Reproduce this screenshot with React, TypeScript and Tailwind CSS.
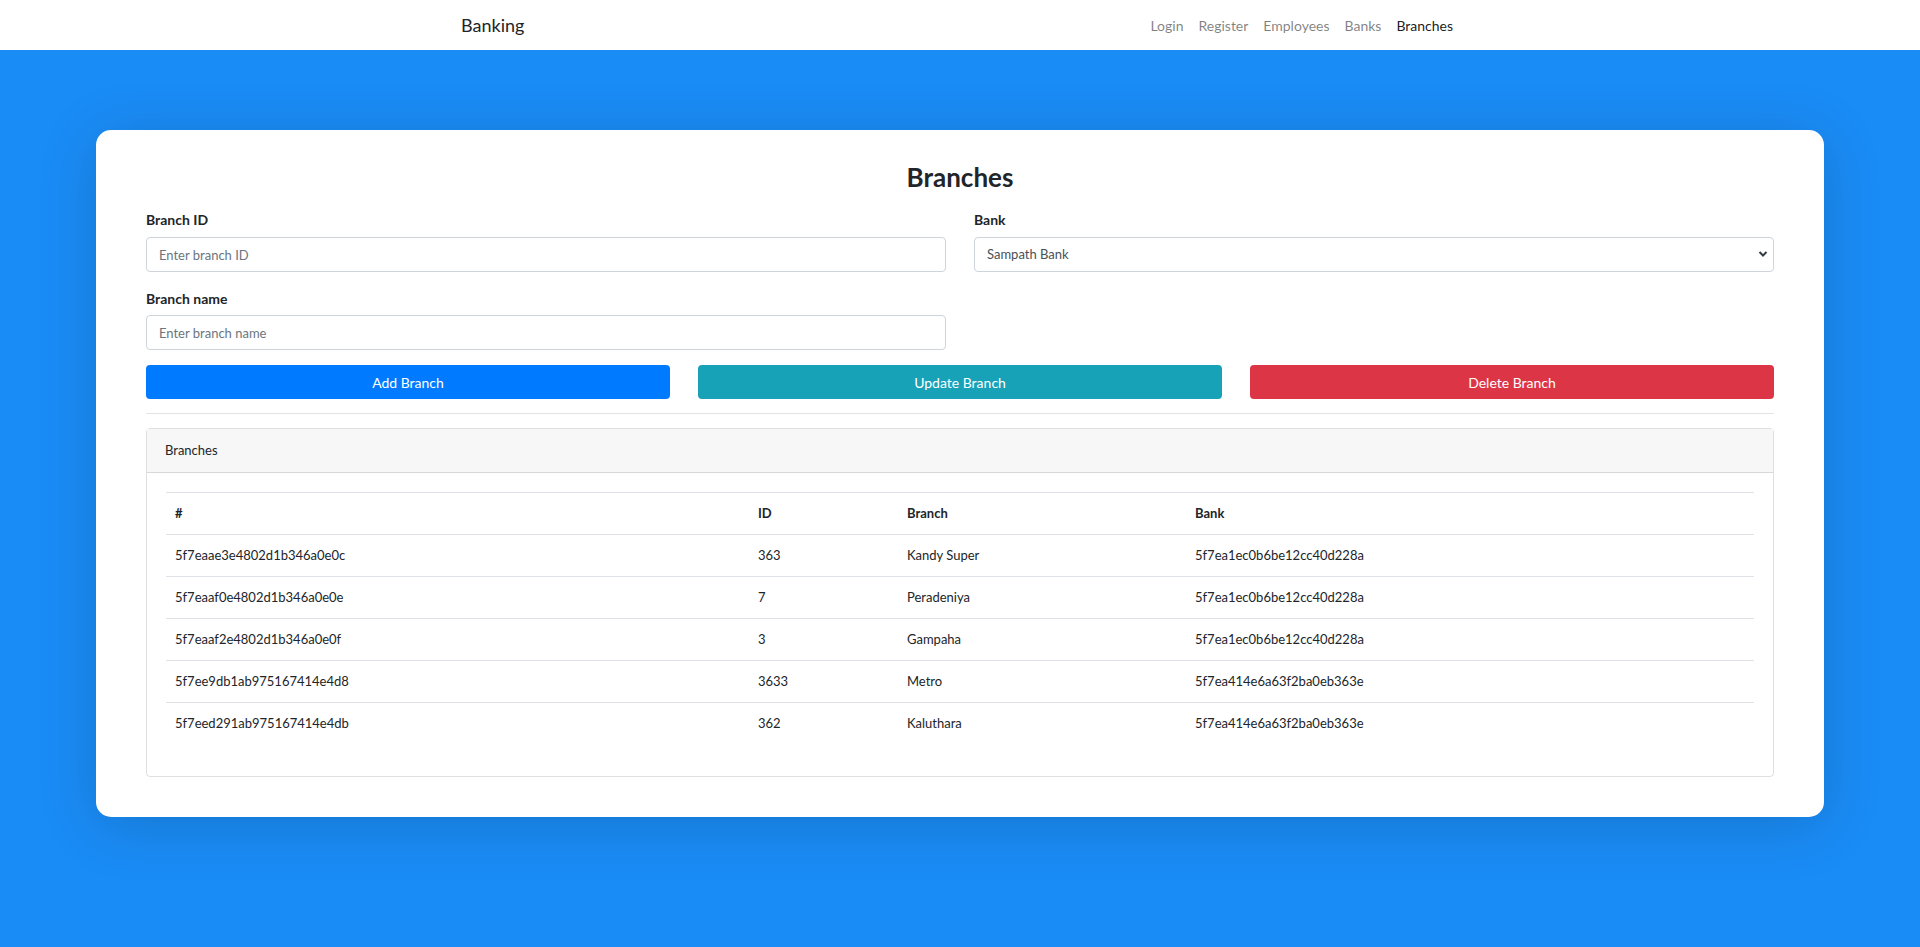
import { useState } from 'react'

const branches = [
  { _id: '5f7eaae3e4802d1b346a0e0c', id: '363', name: 'Kandy Super', bank: '5f7ea1ec0b6be12cc40d228a' },
  { _id: '5f7eaaf0e4802d1b346a0e0e', id: '7', name: 'Peradeniya', bank: '5f7ea1ec0b6be12cc40d228a' },
  { _id: '5f7eaaf2e4802d1b346a0e0f', id: '3', name: 'Gampaha', bank: '5f7ea1ec0b6be12cc40d228a' },
  { _id: '5f7ee9db1ab975167414e4d8', id: '3633', name: 'Metro', bank: '5f7ea414e6a63f2ba0eb363e' },
  { _id: '5f7eed291ab975167414e4db', id: '362', name: 'Kaluthara', bank: '5f7ea414e6a63f2ba0eb363e' },
]

const NavBar = () => {
  const links = ['Login', 'Register', 'Employees', 'Banks', 'Branches']
  return (
    <nav className="relative z-10 h-[50px] bg-white">
      <div className="mx-auto flex h-full w-[998px] items-center justify-between pr-[6px]">
        <span className="text-[18px] text-[#212529]">Banking</span>
        <div className="flex items-center gap-[15px] text-[14px]">
          {links.map((l) => (
            <a
              key={l}
              className={l === 'Branches' ? 'text-[rgba(0,0,0,0.9)]' : 'text-[rgba(0,0,0,0.5)]'}
            >
              {l}
            </a>
          ))}
        </div>
      </div>
    </nav>
  )
}

const BranchForm = () => {
  const [branchId, setBranchId] = useState('')
  const [branchName, setBranchName] = useState('')
  const [bank, setBank] = useState('Sampath Bank')

  return (
    <div>
      <div className="grid grid-cols-2 gap-x-[28px]">
        <div className="mb-[16px]">
          <label className="mb-[7px] block text-[14px] font-bold leading-[21px] text-[#212529]">Branch ID</label>
          <input
            value={branchId}
            onChange={(e) => setBranchId(e.target.value)}
            placeholder="Enter branch ID"
            className="h-[35px] w-full rounded-[4px] border border-[#ced4da] px-[12px] text-[13px] text-[#495057] outline-none placeholder:text-[#6c757d]"
          />
        </div>
        <div className="mb-[16px]">
          <label className="mb-[7px] block text-[14px] font-bold leading-[21px] text-[#212529]">Bank</label>
          <div className="relative">
            <select
              value={bank}
              onChange={(e) => setBank(e.target.value)}
              className="h-[35px] w-full appearance-none rounded-[4px] border border-[#ced4da] bg-white px-[12px] text-[13px] text-[#495057] outline-none"
            >
              <option>Sampath Bank</option>
              <option>Commercial Bank</option>
            </select>
            <svg
              className="pointer-events-none absolute right-[6px] top-[13px]"
              width="10"
              height="8"
              viewBox="0 0 10 8"
            >
              <path d="M1.5 2l3.5 3.5L8.5 2" fill="none" stroke="#343a40" strokeWidth="2" />
            </svg>
          </div>
        </div>
        <div className="mb-[15px]">
          <label className="mb-[6px] block text-[14px] font-bold leading-[21px] text-[#212529]">Branch name</label>
          <input
            value={branchName}
            onChange={(e) => setBranchName(e.target.value)}
            placeholder="Enter branch name"
            className="h-[35px] w-full rounded-[4px] border border-[#ced4da] px-[12px] text-[13px] text-[#495057] outline-none placeholder:text-[#6c757d]"
          />
        </div>
      </div>
      <div className="grid grid-cols-3 gap-x-[28px]">
        <button className="h-[34px] rounded-[4px] bg-[#007bff] text-[14px] text-white">Add Branch</button>
        <button className="h-[34px] rounded-[4px] bg-[#17a2b8] text-[14px] text-white">Update Branch</button>
        <button className="h-[34px] rounded-[4px] bg-[#dc3545] text-[14px] text-white">Delete Branch</button>
      </div>
      <hr className="mb-[14px] mt-[14px] border-t border-[#e3e3e3]" />
    </div>
  )
}

const BranchTable = () => {
  return (
    <div className="rounded-[4px] border border-[rgba(0,0,0,0.125)]">
      <div className="h-[44px] border-b border-[rgba(0,0,0,0.125)] bg-[#f7f7f7] px-[18px] text-[13px] leading-[43px] text-[#212529]">
        Branches
      </div>
      <div className="px-[19px] pb-[31px] pt-[19px]">
        <table className="w-full table-fixed border-collapse text-left text-[13px] text-[#212529]">
          <colgroup>
            <col className="w-[583px]" />
            <col className="w-[149px]" />
            <col className="w-[288px]" />
            <col />
          </colgroup>
          <thead>
            <tr className="h-[42px] border-b border-t border-[#dee2e6]">
              <th className="px-[9px] font-bold">#</th>
              <th className="px-[9px] font-bold">ID</th>
              <th className="px-[9px] font-bold">Branch</th>
              <th className="px-[9px] font-bold">Bank</th>
            </tr>
          </thead>
          <tbody>
            {branches.map((b, i) => (
              <tr key={b._id} className={i < branches.length - 1 ? 'h-[42px] border-b border-[#dee2e6]' : 'h-[42px]'}>
                <td className="px-[9px]">{b._id}</td>
                <td className="px-[9px]">{b.id}</td>
                <td className="px-[9px]">{b.name}</td>
                <td className="px-[9px]">{b.bank}</td>
              </tr>
            ))}
          </tbody>
        </table>
      </div>
    </div>
  )
}

export default function App() {
  return (
    <div className="min-h-[947px] bg-[#1a8cf6] font-['Lato','Liberation_Sans',sans-serif]">
      <NavBar />
      <div className="pt-[80px]">
        <div className="mx-auto w-[90%] rounded-[15px] bg-white px-[50px] pb-[40px] pt-[30px] shadow-[0_8px_60px_rgba(0,0,0,0.16)]">
          <h3 className="mb-[15px] text-center text-[26px] font-bold leading-[34px] text-[#212529]">Branches</h3>
          <BranchForm />
          <BranchTable />
        </div>
      </div>
    </div>
  )
}
